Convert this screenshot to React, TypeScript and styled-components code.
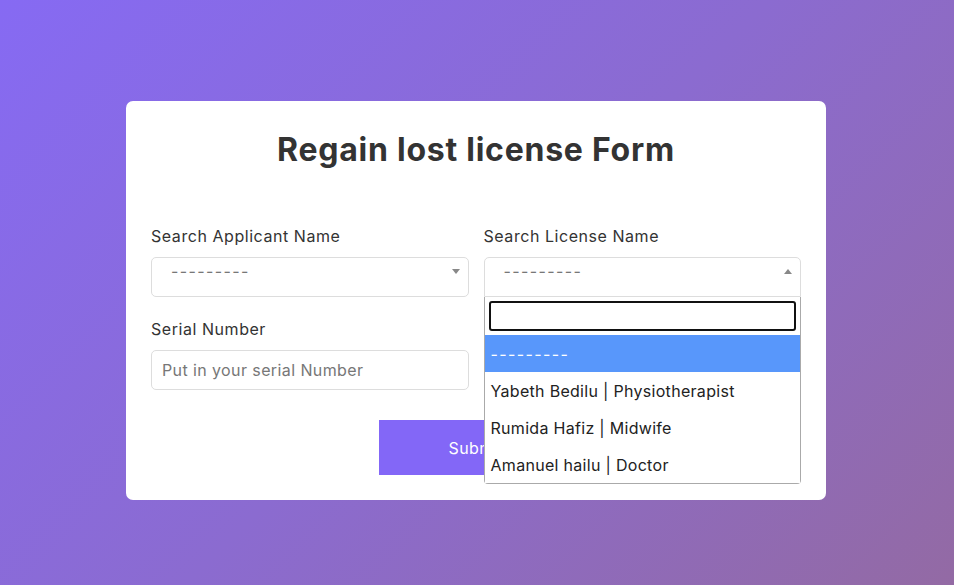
import React from "react";
import styled, { createGlobalStyle } from "styled-components";

const GlobalStyle = createGlobalStyle`
  html, body { margin: 0; padding: 0; }
  body {
    font-family: "Inter", "Open Sans", sans-serif;
    min-height: 585px;
    background: linear-gradient(135deg, #866af3 0%, #8b6bd0 50%, #936aa4 100%);
    background-attachment: fixed;
  }
  * { box-sizing: border-box; }
`;

const Page = styled.div`
  width: 954px;
  height: 585px;
  display: flex;
  justify-content: center;
  align-items: flex-start;
  padding: 101px 2px 0 0;
`;

const Card = styled.form`
  width: 700px;
  background: #fff;
  border-radius: 7px;
  padding: 25px;
  display: flex;
  flex-direction: column;
`;

const Title = styled.h1`
  margin: 0 0 50px;
  font-size: 32px;
  line-height: 48px;
  font-weight: 700;
  letter-spacing: 0.75px;
  color: #333;
  text-align: center;
`;

const Grid = styled.div`
  display: grid;
  grid-template-columns: 1fr 1fr;
  column-gap: 15px;
  row-gap: 20px;
`;

const Field = styled.div`
  position: relative;
  display: flex;
  flex-direction: column;
  gap: 9px;
`;

const Label = styled.label`
  font-size: 16px;
  line-height: 24px;
  letter-spacing: 0.55px;
  color: #333;
`;

const SelectBox = styled.div<{ $open?: boolean }>`
  height: 40px;
  border: 1px solid #ddd;
  border-radius: ${(p) => (p.$open ? "5px 5px 0 0" : "5px")};
  display: flex;
  align-items: center;
  justify-content: space-between;
  padding: 0 8px 12px 19px;
  color: #777;
  font-size: 16px;
  letter-spacing: 1.4px;
`;

const Arrow = styled.span<{ $up?: boolean }>`
  width: 0;
  height: 0;
  border-left: 4px solid transparent;
  border-right: 4px solid transparent;
  ${(p) =>
    p.$up ? "border-bottom: 5px solid #888;" : "border-top: 5px solid #888;"}
`;

const Input = styled.input`
  height: 40px;
  border: 1px solid #ddd;
  border-radius: 5px;
  padding: 0 10px;
  font-family: inherit;
  font-size: 16px;
  letter-spacing: 0.4px;
  color: #333;
  outline: none;
  &::placeholder { color: #777; }
`;

const Dropdown = styled.div`
  position: absolute;
  left: 0;
  right: 0;
  top: 73px;
  background: #fff;
  border: 1px solid #aaa;
  border-top: none;
  border-radius: 0 0 4px 4px;
  z-index: 10;
`;

const SearchWrap = styled.div`
  padding: 4px;
`;

const SearchInput = styled.input`
  display: block;
  width: 100%;
  height: 30px;
  border: 2px solid #111;
  border-radius: 3px;
  outline: none;
`;

const Option = styled.div<{ $active?: boolean }>`
  height: 37px;
  display: flex;
  align-items: center;
  padding: 0 6px;
  font-size: 16px;
  background: ${(p) => (p.$active ? "#5897fb" : "#fff")};
  color: ${(p) => (p.$active ? "#fff" : "#222")};
  letter-spacing: ${(p) => (p.$active ? "1.4px" : "0.3px")};
`;

const Actions = styled.div`
  display: flex;
  justify-content: center;
  margin-top: 30px;
`;

const Button = styled.button`
  width: 194px;
  height: 55px;
  border: none;
  background: #8367f7;
  color: #fff;
  font-family: inherit;
  font-size: 16px;
  letter-spacing: 0.4px;
`;

export default function App() {
  return (
    <>
      <GlobalStyle />
      <Page>
        <Card onSubmit={(e) => e.preventDefault()}>
          <Title>Regain lost license Form</Title>
          <Grid>
            <Field>
              <Label>Search Applicant Name</Label>
              <SelectBox>
                <span>---------</span>
                <Arrow />
              </SelectBox>
            </Field>
            <Field>
              <Label>Search License Name</Label>
              <SelectBox $open>
                <span>---------</span>
                <Arrow $up />
              </SelectBox>
              <Dropdown>
                <SearchWrap>
                  <SearchInput />
                </SearchWrap>
                <Option $active>---------</Option>
                <Option>Yabeth Bedilu | Physiotherapist</Option>
                <Option>Rumida Hafiz | Midwife</Option>
                <Option>Amanuel hailu | Doctor</Option>
              </Dropdown>
            </Field>
            <Field>
              <Label>Serial Number</Label>
              <Input placeholder="Put in your serial Number" />
            </Field>
          </Grid>
          <Actions>
            <Button type="submit">Submit</Button>
          </Actions>
        </Card>
      </Page>
    </>
  );
}
